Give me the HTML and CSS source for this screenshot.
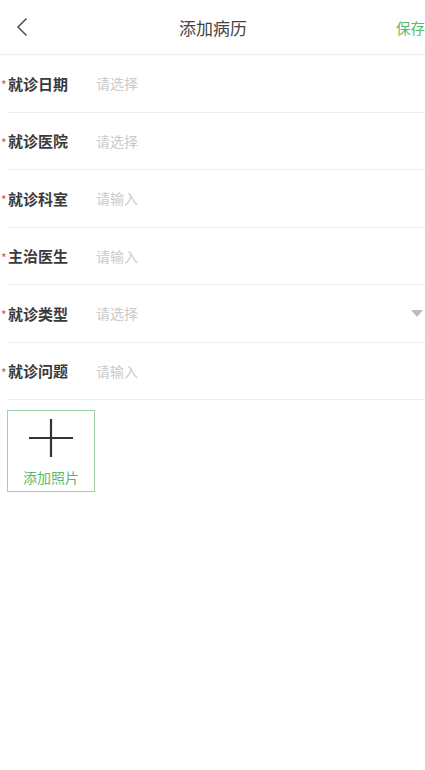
FILE: index.html
```html
<!DOCTYPE html>
<html lang="zh-CN">
  <head>
    <meta charset="UTF-8" />
    <meta name="viewport" content="width=device-width, initial-scale=1.0" />
    <title>添加病历</title>
    <link rel="stylesheet" href="styles.css">
  </head>
  <body>
    <header class="nav">
      <span class="back">
        <svg width="14" height="20" viewBox="0 0 14 20">
          <path d="M11.5 1.5 L3 10 L11.5 18.5" fill="none" stroke="#555" stroke-width="1.6" />
        </svg>
      </span>
      <h1 class="title">添加病历</h1>
      <span class="save">保存</span>
    </header>

    <div class="form">
      <div class="row">
        <span class="star">*</span>
        <span class="label">就诊日期</span>
        <span class="value">请选择</span>
      </div>
      <div class="row">
        <span class="star">*</span>
        <span class="label">就诊医院</span>
        <span class="value">请选择</span>
      </div>
      <div class="row">
        <span class="star">*</span>
        <span class="label">就诊科室</span>
        <span class="value">请输入</span>
      </div>
      <div class="row">
        <span class="star">*</span>
        <span class="label">主治医生</span>
        <span class="value">请输入</span>
      </div>
      <div class="row">
        <span class="star">*</span>
        <span class="label">就诊类型</span>
        <span class="value">请选择</span>
        <span class="arrow"></span>
      </div>
      <div class="row">
        <span class="star">*</span>
        <span class="label">就诊问题</span>
        <span class="value">请输入</span>
      </div>
    </div>

    <div class="photos">
      <div class="add-photo">
        <svg width="46" height="40" viewBox="0 0 46 40">
          <path d="M23 1 V39 M1 20 H45" stroke="#333" stroke-width="2.2" />
        </svg>
        <span class="add-text">添加照片</span>
      </div>
    </div>
  </body>
</html>
```

FILE: styles.css
```css
* {
  margin: 0;
  padding: 0;
  box-sizing: border-box;
  font-family: "Noto Sans CJK SC", "Noto Sans", sans-serif;
}

body {
  background-color: #fff;
  width: 425px;
  overflow: hidden;
}

.nav {
  height: 55px;
  display: grid;
  grid-template-columns: 1fr auto 1fr;
  align-items: center;
  border-bottom: 1px solid #eee;
  box-shadow: 0 1px 2px rgba(0, 0, 0, 0.03);
  padding-left: 15px;
}

.back {
  display: flex;
}

.title {
  font-size: 17px;
  font-weight: normal;
  color: #444;
  margin-left: -14px;
}

.save {
  justify-self: end;
  font-size: 14.5px;
  color: #5cb869;
  white-space: nowrap;
}

.form {
  padding-left: 8px;
}

.row {
  position: relative;
  height: 57.5px;
  display: flex;
  align-items: center;
  border-bottom: 1px solid #eee;
}

.star {
  position: absolute;
  left: -7px;
  top: 21px;
  color: #d9534f;
  font-size: 12px;
}

.label {
  width: 88px;
  font-size: 15px;
  font-weight: bold;
  color: #3a3a3a;
}

.value {
  flex: 1;
  font-size: 14px;
  color: #cacaca;
}

.arrow {
  width: 0;
  height: 0;
  margin-right: 2px;
  border-left: 6px solid transparent;
  border-right: 6px solid transparent;
  border-top: 7px solid #bbb;
}

.photos {
  padding: 10px 7px;
}

.add-photo {
  width: 88px;
  height: 82px;
  border: 1.5px solid #9fd1a8;
  display: flex;
  flex-direction: column;
  align-items: center;
  padding-top: 7px;
}

.add-text {
  margin-top: 9px;
  font-size: 14px;
  color: #5cb869;
}
```
